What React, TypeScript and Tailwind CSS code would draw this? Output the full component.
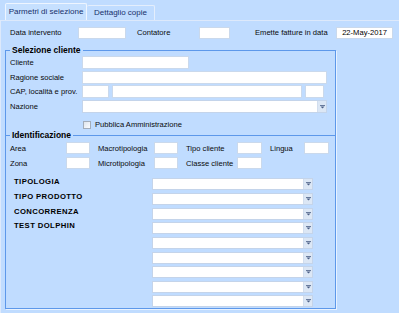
// App.tsx

function Field({ w, h = "h-[12px]" }: { w: string; h?: string }) {
  return <div className={`${w} ${h} shrink-0 border border-[#cad9ec] bg-white`} />;
}

function Combo({ w, h = "h-[12px]" }: { w: string; h?: string }) {
  return (
    <div className={`${w} ${h} flex shrink-0 border border-[#c4d4ea] bg-white`}>
      <div className="flex-1" />
      <div className="flex w-[9px] items-center justify-center border-l border-[#d2deee] bg-[#dce7f5]">
        <svg width="5" height="4" viewBox="0 0 5 4">
          <path d="M0 0.5h5" stroke="#4a5f86" strokeWidth="0.8" />
          <path d="M0.5 1.5h4L2.5 3.6z" fill="#4a5f86" />
        </svg>
      </div>
    </div>
  );
}

export default function App() {
  const selects = ["TIPOLOGIA", "TIPO PRODOTTO", "CONCORRENZA", "TEST DOLPHIN", "", "", "", "", ""];

  return (
    <div className="h-[313px] w-[399px] overflow-hidden bg-[#c0dcff] font-['Liberation_Sans',Arial,sans-serif] text-[7.6px] text-[#0a0a0a]">
      {/* Tabs */}
      <div className="flex h-[20px] items-end pl-[5px]">
        <div className="flex h-[17px] w-[82px] items-center justify-center rounded-t-[2px] border-x border-t border-[#eef5ff] bg-[#c6e0ff] text-[8px] text-[#17306a]">
          Parmetri di selezione
        </div>
        <div className="flex h-[15px] w-[68px] items-center justify-center rounded-t-[2px] border-r border-t border-[#e4eefc] text-[8px] text-[#17306a]">
          Dettaglio copie
        </div>
      </div>

      {/* Panel */}
      <div className="h-[293px] border-l border-t border-[#dde9fb]">
        {/* Top row */}
        <div className="mt-[6px] flex h-[12px] items-center">
          <div className="w-[77px] pl-[9px]">Data intervento</div>
          <Field w="w-[48px]" />
          <div className="ml-[11px] w-[62px]">Contatore</div>
          <Field w="w-[31px]" />
          <div className="ml-[25px] w-[81px]">Emette fatture in data</div>
          <div className="flex h-[12px] w-[57px] items-center justify-center border border-[#cad9ec] bg-white text-black">
            22-May-2017
          </div>
        </div>

        {/* Group box */}
        <div className="ml-[4px] mt-[11px] h-[259px] w-[331px] border border-[#5d98ea] shadow-[1px_1px_0_#e8f2ff]">
          <div className="-mt-[6px] ml-[4px] w-fit bg-[#c0dcff] px-[2px] text-[8.5px] font-bold leading-[11px] text-black">
            Selezione cliente
          </div>

          <div className="flex items-center">
            <div className="w-[76px] pl-[4px]">Cliente</div>
            <Field w="w-[107px]" h="h-[13px]" />
          </div>
          <div className="mt-[2px] flex items-center">
            <div className="w-[76px] pl-[4px]">Ragione sociale</div>
            <Field w="w-[245px]" h="h-[13px]" />
          </div>
          <div className="mt-[1px] flex items-center gap-[3px]">
            <div className="-mr-[3px] w-[76px] pl-[4px]">CAP, località e prov.</div>
            <Field w="w-[27px]" h="h-[13px]" />
            <Field w="w-[190px]" h="h-[13px]" />
            <Field w="w-[19px]" h="h-[13px]" />
          </div>
          <div className="mt-[2px] flex items-center">
            <div className="w-[76px] pl-[4px]">Nazione</div>
            <Combo w="w-[245px]" h="h-[13px]" />
          </div>
          <div className="mt-[6px] flex items-center">
            <div className="ml-[77px] h-[8px] w-[8px] border border-[#a3adba] bg-gradient-to-br from-[#dfe5ec] to-[#fafcff]" />
            <div className="ml-[4px]">Pubblica Amministrazione</div>
          </div>

          {/* Identificazione */}
          <div className="mt-[5px] border-t border-[#5d98ea]">
            <div className="-mt-[6px] ml-[4px] w-fit bg-[#c0dcff] px-[2px] text-[8.5px] font-bold leading-[11px] text-black">
              Identificazione
            </div>
          </div>

          <div className="mt-[1px] flex items-center">
            <div className="w-[60px] pl-[4px]">Area</div>
            <Field w="w-[24px]" />
            <div className="ml-[8px] w-[56px]">Macrotipologia</div>
            <Field w="w-[24px]" />
            <div className="ml-[8px] w-[51px]">Tipo cliente</div>
            <Field w="w-[25px]" />
            <div className="ml-[8px] w-[34px]">Lingua</div>
            <Field w="w-[25px]" />
          </div>
          <div className="mt-[3px] flex items-center">
            <div className="w-[60px] pl-[4px]">Zona</div>
            <Field w="w-[24px]" />
            <div className="ml-[8px] w-[56px]">Microtipologia</div>
            <Field w="w-[24px]" />
            <div className="ml-[8px] w-[51px]">Classe cliente</div>
            <Field w="w-[25px]" />
          </div>

          <div className="mt-[9px] flex flex-col gap-[2.625px]">
            {selects.map((label, i) => (
              <div key={i} className="flex items-start">
                <div className="-mt-[1px] w-[146px] pl-[8px] text-[7.7px] font-bold leading-[10px] tracking-[0.4px] text-black">
                  {label}
                </div>
                <Combo w="w-[161px]" />
              </div>
            ))}
          </div>
        </div>
      </div>
    </div>
  );
}
